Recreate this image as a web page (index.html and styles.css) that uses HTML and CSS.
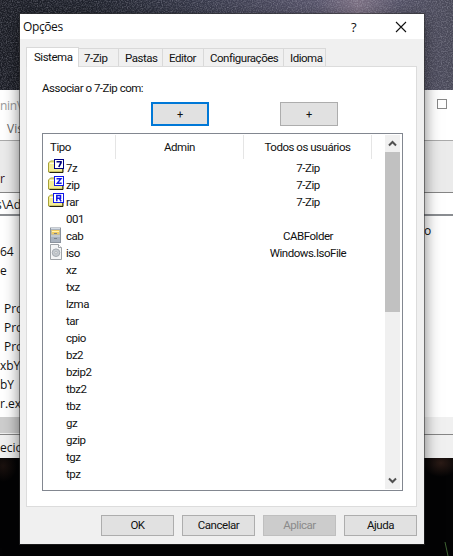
FILE: index.html
```html
<!DOCTYPE html>
<html lang="pt-BR">
<head>
<meta charset="utf-8">
<title>Opções</title>
<link rel="stylesheet" href="styles.css">
</head>
<body>
<svg class="wallpaper" width="453" height="556" aria-hidden="true">
  <defs>
    <linearGradient id="sky"><stop offset="0" stop-color="#1b1d25"/><stop offset=".2" stop-color="#20232d"/><stop offset=".45" stop-color="#383a4b"/><stop offset=".7" stop-color="#57546a"/><stop offset=".79" stop-color="#7c7083"/><stop offset=".88" stop-color="#555367"/><stop offset="1" stop-color="#484857"/></linearGradient>
    <filter id="grain"><feTurbulence type="fractalNoise" baseFrequency=".8" numOctaves="2"/><feColorMatrix values="0 0 0 0 .75  0 0 0 0 .75  0 0 0 0 .85  1.4 0 0 0 -.55"/></filter>
    <radialGradient id="rust"><stop offset="0" stop-color="#2b1b16"/><stop offset="1" stop-color="#2b1b16" stop-opacity="0"/></radialGradient>
  </defs>
  <rect width="453" height="556" fill="#030304"/>
  <rect width="453" height="92" fill="url(#sky)"/>
  <rect width="453" height="92" filter="url(#grain)" opacity=".45"/>
  <ellipse cx="441" cy="463" rx="18" ry="14" fill="url(#rust)"/>
  <ellipse cx="3" cy="466" rx="14" ry="16" fill="url(#rust)" opacity=".6"/>
  <path d="M445 542l3 14" stroke="#3f6333"/>
</svg>
<section class="explorer">
  <header class="ex-title"><span>nin\</span><i class="maximize"></i></header>
  <div class="ex-menu">Vis</div>
  <div class="ex-ribbon">r</div>
  <div class="ex-address">s\Ad</div>
  <div class="ex-list">
    <div class="ex-cols">o</div>
    <div>64</div><div>e</div><div></div>
    <div class="indent">Pro</div><div class="indent">Pro</div><div class="indent">Pro</div>
    <div>xbY</div><div>bY</div><div>r.ex</div>
  </div>
  <div class="ex-scroll"><i></i></div>
  <footer class="ex-status">ecio</footer>
</section>
<main class="dialog">
  <header class="titlebar">
    <h1>Opções</h1>
    <span class="help">?</span>
    <svg class="close" width="12" height="12"><path d="M1 1l10 10M11 1L1 11" stroke="#111" stroke-width="1.1"/></svg>
  </header>
  <nav class="tabs">
    <span class="tab active t1">Sistema</span><span class="tab t2">7-Zip</span><span class="tab t3">Pastas</span><span class="tab t4">Editor</span><span class="tab t5">Configurações</span><span class="tab t6">Idioma</span>
  </nav>
  <section class="panel">
    <p class="label">Associar o 7-Zip com:</p>
    <div class="plus-row"><button class="plus focused">+</button><button class="plus">+</button></div>
    <div class="listbox">
      <div class="list">
        <div class="row head"><span>Tipo</span><span>Admin</span><span>Todos os usuários</span></div>
        <div class="row"><svg class="icon" width="18" height="17"><use href="#folder"/><rect x="6.5" y=".5" width="9" height="9" fill="#fff" stroke="#000080"/><path d="M8.500 2.700h4.500v1l-2.200 4.300" fill="none" stroke="#000080" stroke-width="1.600"/></svg><span>7z</span><span></span><span>7-Zip</span></div>
        <div class="row"><svg class="icon" width="18" height="17"><use href="#folder"/><rect x="6.500" y=".5" width="9" height="9" fill="#fff" stroke="#1018e8"/><path d="M8.500 2.700h4.500L9.200 7.300h4.500" fill="none" stroke="#1018e8" stroke-width="1.400"/></svg><span>zip</span><span></span><span>7-Zip</span></div>
        <div class="row"><svg class="icon" width="18" height="17"><use href="#folder"/><rect x="5.500" y=".5" width="10" height="9" fill="#fff" stroke="#1018e8"/><path d="M8.800 8.300V2.500h3.700v2.700H9M11.500 5.300l1.600 3" fill="none" stroke="#1018e8" stroke-width="1.500"/></svg><span>rar</span><span></span><span>7-Zip</span></div>
        <div class="row"><i class="icon"></i><span>001</span></div>
        <div class="row"><svg class="icon" width="18" height="17"><rect x="2.500" y="1" width="10" height="14.500" fill="#a9b2be" stroke="#8b939d"/><path d="M3 1.500h9" stroke="#d3dae2"/><rect x="3.500" y="3" width="8" height="4.500" fill="#f0cb62"/><path d="M4 4.500h7" stroke="#fff2b3"/><path d="M3 9h9" stroke="#dbe1e7"/><path d="M6 6.500h3M6 11.500h3" stroke="#7c848c" stroke-width="1.200"/></svg><span>cab</span><span></span><span>CABFolder</span></div>
        <div class="row"><svg class="icon" width="18" height="17"><path d="M2.500.5h8l3 3v12h-11z" fill="#f4f5f6" stroke="#a0a4a8"/><path d="M10.500.5v3h3" fill="#fff" stroke="#a0a4a8"/><circle cx="8" cy="8.700" r="3.800" fill="#c6cbd0" stroke="#a4aab0"/><circle cx="8" cy="8.700" r="1.200" fill="#eee" stroke="#999fa5" stroke-width=".6"/></svg><span>iso</span><span></span><span>Windows.IsoFile</span></div>
        <div class="row"><i class="icon"></i><span>xz</span></div>
        <div class="row"><i class="icon"></i><span>txz</span></div>
        <div class="row"><i class="icon"></i><span>lzma</span></div>
        <div class="row"><i class="icon"></i><span>tar</span></div>
        <div class="row"><i class="icon"></i><span>cpio</span></div>
        <div class="row"><i class="icon"></i><span>bz2</span></div>
        <div class="row"><i class="icon"></i><span>bzip2</span></div>
        <div class="row"><i class="icon"></i><span>tbz2</span></div>
        <div class="row"><i class="icon"></i><span>tbz</span></div>
        <div class="row"><i class="icon"></i><span>gz</span></div>
        <div class="row"><i class="icon"></i><span>gzip</span></div>
        <div class="row"><i class="icon"></i><span>tgz</span></div>
        <div class="row"><i class="icon"></i><span>tpz</span></div>
      </div>
      <div class="scrollbar">
        <svg width="15" height="17"><path d="M4 10.500l3.500-3.500 3.500 3.500" fill="none" stroke="#505050" stroke-width="2"/></svg>
        <i class="thumb"></i>
        <svg width="15" height="17"><path d="M4 6.500l3.500 3.500 3.500-3.500" fill="none" stroke="#505050" stroke-width="2"/></svg>
      </div>
    </div>
  </section>
  <footer class="actions"><button>OK</button><button>Cancelar</button><button disabled>Aplicar</button><button>Ajuda</button></footer>
</main>
<svg width="0" height="0" class="defs"><defs><g id="folder"><path d="M.5 13V4l2-2h4l1.500 1.500h6.500V13z" fill="#f5ee96" stroke="#a8a238"/><path d="M2 4.500h5" stroke="#fffde0"/><path d="M1.500 13.500h13.500V9" fill="none" stroke="#26240f"/></g></defs></svg>
</body>
</html>
```
FILE: styles.css
```css
* { box-sizing: border-box; }
body { margin: 0; width: 453px; height: 556px; overflow: hidden; position: relative; font: 11.5px/17px Roboto, "Liberation Sans", sans-serif; letter-spacing: -.48px; color: #111; background: #000; }
.wallpaper { display: block; }
.defs { position: absolute; }

.explorer { position: absolute; left: 0; top: 90px; width: 453px; height: 368px; display: flex; flex-direction: column; background: #fff; font: 12px/19px "Open Sans", sans-serif; letter-spacing: 0; overflow: hidden; }
.ex-title { height: 29px; padding: 6px 6px 0 0; display: flex; justify-content: space-between; color: #999; letter-spacing: -.3px; }
.maximize { width: 10px; height: 10px; margin-top: 3px; border: 1px solid #888; }
.ex-menu { height: 21px; padding-left: 7px; color: #666; }
.ex-ribbon { height: 53px; border-top: 1px solid #aaa; border-bottom: 1px solid #858585; background: #ebebeb; padding-top: 28px; color: #301020; }
.ex-address { height: 23px; line-height: 24px; border-bottom: 2px solid #8a8d91; text-indent: -4px; }
.ex-list { height: 201px; padding-top: 6px; }
.ex-list div { height: 19px; }
.ex-list .ex-cols { height: 20px; line-height: 17px; padding-left: 424px; }
.ex-list .indent { padding-left: 4px; }
.ex-scroll { height: 17px; background: #f0f0f0; }
.ex-scroll i { display: block; width: 200px; height: 16px; background: #cdcdcd; }
.ex-status { height: 24px; border-top: 1px solid #858585; background: #f0f0f0; line-height: 25px; }

.dialog { position: absolute; left: 20px; top: 14px; width: 404px; height: 530px; display: flex; flex-direction: column; background: #f0f0f0; box-shadow: 0 0 0 1px rgba(50, 50, 50, .55), 0 4px 15px rgba(0, 0, 0, .55); }
.titlebar { height: 25px; display: flex; align-items: center; background: #fff; }
h1 { flex: 1; margin: 0 0 0 3px; font: 12px/24px "Open Sans", sans-serif; letter-spacing: -.4px; }
.help { width: 8px; margin-right: 36px; font: 13px/24px "Open Sans", sans-serif; }
.close { margin-right: 17px; }
.tabs { height: 27px; padding: 7px 0 0 6px; display: flex; align-items: flex-end; }
.tab { height: 18px; border: 1px solid #d9d9d9; border-width: 1px 1px 0 0; padding-left: 6px; line-height: 19px; white-space: nowrap; }
.tab.active { height: 20px; margin-bottom: -1px; border-left-width: 1px; background: #fff; padding-left: 7px; line-height: 18px; position: relative; }
.t1 { width: 53px; } .t2 { width: 40px; padding-left: 5px; } .t3 { width: 44px; } .t4 { width: 41px; } .t5 { width: 80px; } .t6 { width: 42px; }
.panel { width: 391px; height: 441px; margin-left: 6px; padding: 13px 0 0 15px; border: 1px solid #dcdcdc; background: #fff; }
.label { margin: 0; height: 22px; }
.plus-row { height: 31px; padding-left: 109px; display: flex; gap: 71px; }
button { padding: 0; border: 1px solid #adadad; background: #e1e1e1; color: #111; font: inherit; letter-spacing: inherit; }
.plus { width: 58px; height: 24px; font-size: 11px; letter-spacing: 0; }
.plus.focused { border: 2px solid #0078d7; }
.listbox { width: 361px; height: 358px; border: 1px solid #828790; padding: 1px 2px 1px 5px; display: flex; justify-content: space-between; }
.list { width: 324px; }
.row { height: 17px; display: grid; grid-template-columns: 18px 50px 128px 128px; }
.row > span:nth-child(4) { text-align: center; }
.row > span { line-height: 17px; white-space: nowrap; }
.row .icon { margin-top: -1px; overflow: visible; }
.head { height: 24px; grid-template-columns: 68px 128px 128px; margin-bottom: 1px; }
.head span { line-height: 24px; text-align: center; border-right: 1px solid #e5e5e5; }
.head span:first-child { text-align: left; padding-left: 2px; }
.scrollbar { width: 15px; display: flex; flex-direction: column; background: #f0f0f0; }
.scrollbar svg { display: block; }
.thumb { height: 160px; background: #c1c1c1; margin-bottom: auto; }
.actions { height: 37px; padding: 8px 7px 0 0; display: flex; justify-content: flex-end; gap: 8px; }
.actions button { width: 73px; height: 21px; }
.actions button:disabled { background: #ccc; border-color: #bfbfbf; color: #8a8a8a; }
```
